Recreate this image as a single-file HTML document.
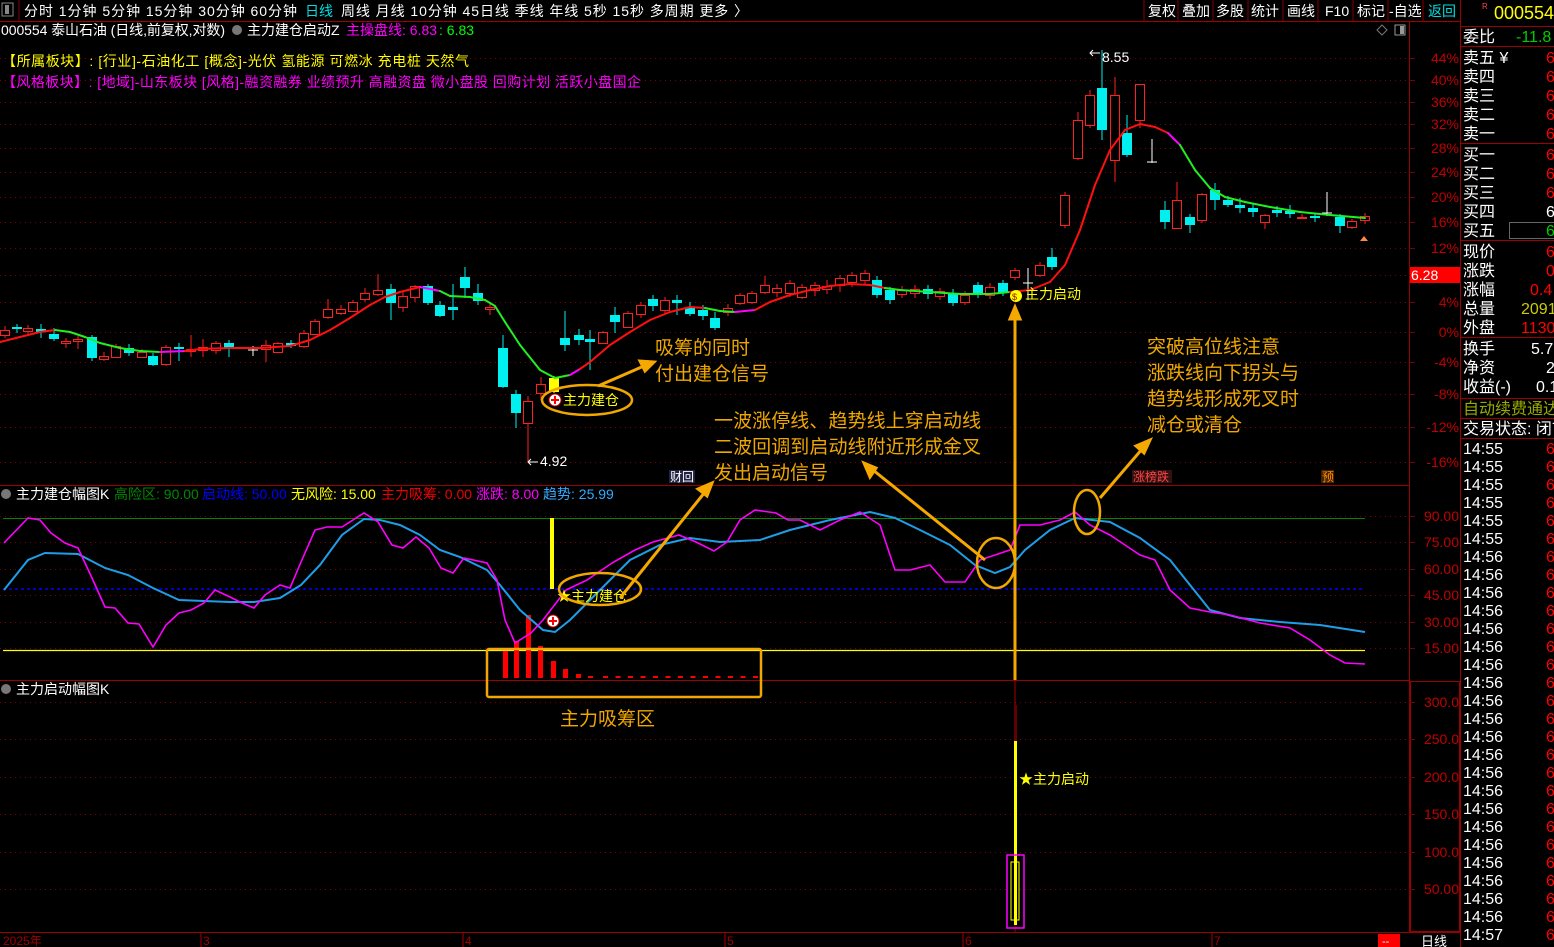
<!DOCTYPE html>
<html><head><meta charset="utf-8">
<style>
html,body{margin:0;padding:0;background:#000;width:1554px;height:947px;overflow:hidden;font-family:"Liberation Sans","Noto Sans CJK SC",sans-serif;}
svg{position:absolute;left:0;top:0}
text{font-family:"Liberation Sans","Noto Sans CJK SC",sans-serif;}
</style></head><body>
<svg id="s" width="1554" height="947" viewBox="0 0 1554 947">
<rect width="1554" height="947" fill="#000"/>
<line x1="0" y1="21.5" x2="1460" y2="21.5" stroke="#a00000"/>
<rect x="2" y="3" width="11" height="13" fill="none" stroke="#888"/><rect x="5" y="5" width="4" height="9" fill="#888"/>
<line x1="19" y1="0" x2="19" y2="21" stroke="#800"/>
<g font-size="14" fill="#fff">
<text x="24" y="16" textLength="273" lengthAdjust="spacing">分时 1分钟 5分钟 15分钟 30分钟 60分钟</text>
<text x="305" y="16" fill="#00e0e0">日线</text>
<text x="341" y="16" textLength="407" lengthAdjust="spacing">周线 月线 10分钟 45日线 季线 年线 5秒 15秒 多周期 更多 〉</text>
<text x="1148" y="16">复权</text><text x="1182" y="16">叠加</text><text x="1216" y="16">多股</text><text x="1251" y="16">统计</text><text x="1287" y="16">画线</text><text x="1325" y="16">F10</text><text x="1357" y="16">标记</text><text x="1389" y="16">-自选</text><text x="1428" y="16" fill="#00e0e0">返回</text>
</g>
<g stroke="#800"><line x1="1144" y1="0" x2="1144" y2="21"/><line x1="1178" y1="0" x2="1178" y2="21"/><line x1="1213" y1="0" x2="1213" y2="21"/><line x1="1248" y1="0" x2="1248" y2="21"/><line x1="1283" y1="0" x2="1283" y2="21"/><line x1="1318" y1="0" x2="1318" y2="21"/><line x1="1353" y1="0" x2="1353" y2="21"/><line x1="1388" y1="0" x2="1388" y2="21"/><line x1="1423" y1="0" x2="1423" y2="21"/></g>
<g font-size="14">
<text x="1" y="35" fill="#fff" textLength="224" lengthAdjust="spacing">000554 泰山石油 (日线,前复权,对数)</text>
<circle cx="237" cy="30" r="5" fill="#777"/>
<text x="247" y="35" fill="#fff">主力建仓启动Z</text>
<text x="346" y="35" fill="#f0f">主操盘线: 6.83</text>
<text x="439" y="35" fill="#0f0">: 6.83</text>
<text x="2" y="66" fill="#ff0" textLength="467" lengthAdjust="spacing">【所属板块】: [行业]-石油化工 [概念]-光伏 氢能源 可燃冰 充电桩 天然气</text>
<text x="2" y="87" fill="#f0f" textLength="639" lengthAdjust="spacing">【风格板块】: [地域]-山东板块 [风格]-融资融券 业绩预升 高融资盘 微小盘股 回购计划 活跃小盘国企</text>
</g>
<path d="M1382 25l5 5-5 5-5-5z" fill="none" stroke="#777"/><rect x="1395" y="25" width="10" height="10" fill="none" stroke="#999"/><rect x="1400" y="26" width="4" height="8" fill="#999"/>
<line x1="1409.5" y1="22" x2="1409.5" y2="932" stroke="#900"/>
<line x1="1460.5" y1="0" x2="1460.5" y2="947" stroke="#900"/>
<line x1="0" y1="485.5" x2="1409" y2="485.5" stroke="#900"/>
<line x1="0" y1="680.5" x2="1409" y2="680.5" stroke="#900"/>
<line x1="0" y1="932.5" x2="1460" y2="932.5" stroke="#900"/>
<rect x="1410.5" y="681.5" width="49" height="250" fill="none" stroke="#900"/>
<g id="grid" stroke="#700" stroke-dasharray="1 4"></g>
<g id="axis" font-size="14" fill="#c00000" text-anchor="end"></g>
<rect x="1410" y="267" width="50" height="16" fill="#f00"/><text x="1411" y="280" font-size="14" fill="#fff">6.28</text>
<g id="cdl"></g>
<g id="ma" fill="none" stroke-width="2"></g>
<text x="1102" y="62" font-size="14" fill="#fff">8.55</text><path d="M1090 53h10M1093 50l-3 3 3 3" stroke="#fff" fill="none"/>
<text x="540" y="466" font-size="14" fill="#fff">4.92</text><path d="M528 462h10M531 459l-3 3 3 3" stroke="#fff" fill="none"/>
<path d="M1360 241l4-5 4 5z" fill="#f84"/>
<circle cx="555" cy="400" r="6" fill="#fff" stroke="#c00"/><path d="M551 400h8M555 396v8" stroke="#f00" stroke-width="2"/>
<text x="563" y="405" font-size="14" fill="#ff0">主力建仓</text>
<ellipse cx="587" cy="400" rx="45" ry="15" fill="none" stroke="#f0a800" stroke-width="2.5"/>
<circle cx="1016" cy="296" r="6" fill="#ff0"/><text x="1012" y="300" font-size="9" fill="#a00">$</text>
<text x="1025" y="299" font-size="14" fill="#ff0">主力启动</text>
<g font-size="14">
<circle cx="6" cy="494" r="5" fill="#777"/>
<text x="16" y="499" fill="#fff">主力建仓幅图K</text>
<text x="114" y="499" fill="#080">高险区: 90.00</text>
<text x="202" y="499" fill="#00f">启动线: 50.00</text>
<text x="291" y="499" fill="#ff0">无风险: 15.00</text>
<text x="381" y="499" fill="#e00">主力吸筹: 0.00</text>
<text x="476" y="499" fill="#f0f">涨跌: 8.00</text>
<text x="543" y="499" fill="#3af">趋势: 25.99</text>
</g>
<rect x="669" y="470" width="26" height="13" fill="#224"/><text x="670" y="481" font-size="12" fill="#fff">财回</text>
<rect x="1132" y="470" width="40" height="13" fill="#311"/><text x="1133" y="481" font-size="12" fill="#f44">涨榜跌</text>
<rect x="1321" y="470" width="13" height="13" fill="#420"/><text x="1322" y="481" font-size="12" fill="#f80">预</text>
<line x1="3" y1="518.5" x2="1365" y2="518.5" stroke="#080"/>
<line x1="3" y1="589" x2="1365" y2="589" stroke="#00f" stroke-width="1.5" stroke-dasharray="3 3"/>
<line x1="3" y1="650.5" x2="1365" y2="650.5" stroke="#ff0" stroke-width="1.2"/>
<g id="bars" fill="#f00"></g>
<rect x="550" y="518" width="4" height="71" fill="#ff0"/>
<polyline id="blue" fill="none" stroke="#1e9ee8" stroke-width="2"/>
<polyline id="mag" fill="none" stroke="#f0f" stroke-width="1.6"/>
<circle cx="553" cy="621" r="6" fill="#fff" stroke="#c00"/><path d="M549 621h8M553 617v8" stroke="#f00" stroke-width="2"/>
<text x="557" y="601" font-size="14" fill="#ff0">★主力建仓</text>
<ellipse cx="600" cy="589" rx="41" ry="16" fill="none" stroke="#f0a800" stroke-width="2.5"/>
<ellipse cx="996" cy="563" rx="19" ry="25" fill="none" stroke="#f0a800" stroke-width="2.5"/>
<ellipse cx="1087" cy="512" rx="13" ry="22" fill="none" stroke="#f0a800" stroke-width="2.5"/>
<rect x="487" y="649" width="274" height="48" rx="2" fill="none" stroke="#f0a800" stroke-width="2.5"/>
<circle cx="6" cy="689" r="5" fill="#777"/><text x="16" y="694" font-size="14" fill="#fff">主力启动幅图K</text>
<line x1="1015" y1="486" x2="1015" y2="932" stroke="#a00"/>
<rect x="1014" y="705" width="3" height="36" fill="#600"/>
<rect x="1014" y="741" width="3" height="184" fill="#ff0"/>
<rect x="1007" y="855" width="17" height="73" fill="none" stroke="#f0f" stroke-width="1.5"/>
<rect x="1011" y="862" width="8" height="58" fill="none" stroke="#ff0"/>
<text x="1019" y="784" font-size="14" fill="#ff0">★主力启动</text>
<g stroke="#f5a800" stroke-width="3" fill="#f5a800">
<line x1="598" y1="386" x2="644" y2="366"/><path d="M654 362l-14-1 5 10z"/>
<line x1="620" y1="598" x2="705" y2="492"/><path d="M712 483l-14 6 9 7z"/>
<line x1="985" y1="560" x2="873" y2="470"/><path d="M864 463l6 14 6-9z"/>
<line x1="1100" y1="498" x2="1143" y2="448"/><path d="M1150 440l-14 6 8 7z"/>
<line x1="1015" y1="680" x2="1015" y2="318"/><path d="M1015 307l-5 12h10z"/>
</g>
<g font-size="19" fill="#f0a800">
<text x="655" y="354">吸筹的同时</text><text x="655" y="380">付出建仓信号</text>
<text x="714" y="427" textLength="267" lengthAdjust="spacing">一波涨停线、趋势线上穿启动线</text><text x="714" y="453" textLength="267" lengthAdjust="spacing">二波回调到启动线附近形成金叉</text><text x="714" y="479">发出启动信号</text>
<text x="1147" y="353">突破高位线注意</text><text x="1147" y="379">涨跌线向下拐头与</text><text x="1147" y="405">趋势线形成死叉时</text><text x="1147" y="431">减仓或清仓</text>
<text x="560" y="725">主力吸筹区</text>
</g>
<g font-size="12" fill="#a00000"><text x="3" y="945">2025年</text><text x="203" y="945">3</text><text x="465" y="945">4</text><text x="727" y="945">5</text><text x="965" y="945">6</text><text x="1214" y="945">7</text></g>
<g stroke="#a00"><line x1="201" y1="933" x2="201" y2="947"/><line x1="463" y1="933" x2="463" y2="947"/><line x1="725" y1="933" x2="725" y2="947"/><line x1="963" y1="933" x2="963" y2="947"/><line x1="1212" y1="933" x2="1212" y2="947"/></g>
<rect x="1378" y="934" width="22" height="13" fill="#f00"/><text x="1382" y="945" font-size="11" fill="#fff">--</text>
<text x="1421" y="946" font-size="13" fill="#fff">日线</text>
<text x="1482" y="9" font-size="8" fill="#f44">R</text>
<text x="1494" y="19" font-size="18" fill="#ff0">000554</text>
<g stroke="#900"><line x1="1461" y1="26.5" x2="1554" y2="26.5"/><line x1="1461" y1="46.5" x2="1554" y2="46.5"/><line x1="1461" y1="143.5" x2="1554" y2="143.5"/><line x1="1461" y1="240.5" x2="1554" y2="240.5"/><line x1="1461" y1="337.5" x2="1554" y2="337.5"/><line x1="1461" y1="398.5" x2="1554" y2="398.5"/><line x1="1461" y1="418.5" x2="1554" y2="418.5"/><line x1="1461" y1="438.5" x2="1554" y2="438.5"/></g>
<rect x="1509.5" y="222.5" width="45" height="16" fill="none" stroke="#666"/>
<g id="rp" font-size="16" fill="#fff"></g>
</svg>
<script>
var NS="http://www.w3.org/2000/svg";
function el(p,t,a,tx){var e=document.createElementNS(NS,t);for(var k in a)e.setAttribute(k,a[k]);if(tx!=null)e.textContent=tx;document.getElementById(p).appendChild(e);return e;}
var ax=[["44%",58],["40%",80],["36%",102],["32%",124],["28%",148],["24%",172],["20%",197],["16%",222],["12%",248],["",275],["4%",302],["0%",332],["-4%",362],["-8%",394],["-12%",427],["-16%",462],
["90.00",516],["75.00",542],["60.00",569],["45.00",595],["30.00",622],["15.00",648],
["300.0",702],["250.0",739],["200.0",777],["150.0",814],["100.0",852],["50.00",889]];
ax.forEach(function(a){var y=a[1];el("grid","line",{x1:0,y1:y+0.5,x2:1409,y2:y+0.5});
if(a[0])el("axis","text",{x:1459,y:y+5},a[0]);el("grid","line",{x1:1409,y1:y+0.5,x2:1415,y2:y+0.5,"stroke-dasharray":"none"});});
var C=[[5,330,335,326,338,'r'],[17,327,329,324,333,'c'],[28,328,331,325,334,'r'],[41,329,332,324,338,'c'],[54,334,339,328,341,'c'],[66,341,343,338,348,'r'],[78,339,341,336,349,'r'],[92,337,358,335,361,'c'],[104,356,359,352,361,'r'],[116,346,357,344,358,'r'],[129,348,353,344,356,'c'],[142,352,357,349,358,'r'],[153,356,365,353,366,'c'],[166,347,364,345,366,'r'],[179,347,349,343,361,'c'],[191,349,351,335,357,'r'],[203,347,350,339,357,'r'],[216,343,350,341,354,'r'],[229,343,348,340,357,'c'],[253,350,351,346,356,'w'],[266,345,349,340,362,'r'],[278,343,352,342,353,'r'],[291,343,346,340,348,'c'],[304,333,346,330,348,'r'],[315,321,334,319,335,'r'],[328,309,317,299,319,'r'],[341,309,313,305,315,'r'],[353,302,311,300,312,'r'],[365,293,299,288,302,'r'],[378,290,294,274,296,'r'],[391,289,303,284,320,'c'],[403,296,307,291,312,'r'],[415,286,297,285,302,'r'],[428,286,303,284,305,'c'],[440,305,316,301,317,'c'],[453,307,310,284,320,'c'],[465,277,288,267,298,'c'],[478,293,301,284,305,'c'],[490,307,309,303,315,'r'],[503,348,387,335,388,'c'],[516,394,413,390,428,'c'],[528,401,423,396,462,'r'],[541,384,393,377,400,'r'],[554,378,392,376,393,'y'],[565,338,345,311,351,'c'],[579,335,340,329,345,'c'],[590,339,342,330,370,'c'],[603,332,343,331,344,'r'],[615,315,322,307,333,'c'],[628,313,327,311,328,'r'],[641,305,314,302,318,'r'],[653,299,306,295,311,'c'],[665,300,310,297,314,'r'],[677,300,303,295,315,'c'],[690,308,314,302,316,'c'],
[703,310,316,305,320,'c'],[715,318,328,312,330,'c'],[728,308,312,304,316,'r'],[740,295,303,293,305,'r'],[752,293,302,291,304,'r'],[765,285,292,276,294,'r'],[777,288,292,284,297,'r'],[790,283,293,280,297,'r'],[802,287,297,284,299,'r'],[815,285,290,282,296,'r'],[827,286,289,280,294,'r'],[840,278,285,275,292,'r'],[852,275,282,272,287,'r'],[865,273,280,270,284,'r'],[877,280,295,276,298,'c'],[890,290,300,287,304,'c'],[902,290,294,286,298,'r'],[915,289,293,285,298,'r'],[928,289,294,285,299,'c'],[940,291,296,288,300,'r'],[953,293,303,289,306,'c'],[965,295,302,291,305,'r'],[978,285,293,282,298,'c'],[990,287,295,283,299,'r'],[1003,283,293,280,296,'c'],[1015,270,277,268,280,'r'],[1028,283,285,268,300,'w'],[1040,265,275,262,277,'r'],[1052,257,267,248,270,'c'],[1065,195,225,192,228,'r'],[1078,120,158,112,160,'r'],[1090,95,125,90,128,'r'],[1102,88,130,50,140,'c'],[1115,95,160,77,182,'r'],[1127,133,155,115,157,'c'],[1140,84,120,84,128,'r'],[1152,162,163,139,163,'w'],[1165,210,222,201,229,'c'],[1177,200,228,182,229,'r'],[1190,217,225,214,233,'c'],[1202,194,220,193,223,'r'],[1215,190,200,183,210,'c'],[1228,200,205,196,207,'c'],[1240,205,208,198,213,'c'],[1253,208,212,204,217,'c'],[1265,215,222,214,229,'r'],[1277,210,213,206,217,'c'],[1290,211,214,205,218,'c'],[1302,217,218,214,219,'r'],[1315,216,218,213,222,'c'],[1327,213,214,192,216,'w'],[1340,217,226,214,233,'c'],[1352,221,227,219,229,'r'],[1365,216,220,213,224,'r']];
var col={r:'#ff2020',c:'#00f0f0',y:'#ffff00',w:'#ffffff'};
C.forEach(function(c){var x=c[0],k=c[5],cl=col[k];
el("cdl","line",{x1:x,y1:c[3],x2:x,y2:c[4],stroke:cl});
var h=Math.max(1,c[2]-c[1]);
if(k=='r')el("cdl","rect",{x:x-4.5,y:c[1]+0.5,width:9,height:h,fill:'#000',stroke:cl});
else if(k=='w')el("cdl","line",{x1:x-5,y1:c[1],x2:x+5,y2:c[1],stroke:cl});
else el("cdl","rect",{x:x-5,y:c[1],width:10,height:h,fill:cl});});
var M=[[0,342,'r'],[20,337,'r'],[40,332,'r'],[55,330,'r'],[70,332,'g'],[85,337,'g'],[100,343,'g'],[120,348,'g'],[140,351,'g'],[160,352,'g'],[185,351,'m'],[200,349,'r'],[230,348,'r'],[260,348,'r'],[290,346,'r'],[310,340,'r'],[330,330,'r'],[350,318,'r'],[370,305,'r'],[385,297,'r'],[400,292,'r'],[420,287,'r'],[440,291,'m'],[450,296,'g'],[470,297,'g'],[485,300,'g'],[495,306,'g'],[505,322,'g'],[520,345,'g'],[540,370,'g'],[555,378,'g'],[570,375,'g'],[580,369,'m'],[590,362,'r'],[610,345,'r'],[630,332,'r'],[650,320,'r'],[670,312,'r'],[690,307,'r'],[705,308,'r'],[720,311,'g'],[735,312,'g'],[755,310,'m'],[770,302,'r'],[790,295,'r'],[810,290,'r'],[830,286,'r'],[850,284,'r'],[870,285,'r'],[885,288,'r'],[900,290,'g'],[930,292,'g'],[960,294,'g'],[990,294,'g'],[1010,292,'g'],[1030,290,'r'],[1050,282,'r'],[1065,265,'r'],[1080,230,'r'],[1095,185,'r'],[1110,150,'r'],[1125,130,'r'],[1140,124,'r'],[1155,127,'r'],[1168,133,'r'],[1175,140,'m'],[1180,145,'m'],[1195,170,'g'],[1210,188,'g'],[1225,197,'g'],[1245,202,'g'],[1270,207,'g'],[1300,212,'g'],[1330,215,'g'],[1365,218,'g']];
var mc={r:'#ff1010',g:'#20f020',m:'#f0f'};
for(var i=1;i<M.length;i++)el("ma","line",{x1:M[i-1][0],y1:M[i-1][1],x2:M[i][0],y2:M[i][1],stroke:mc[M[i][2]],"stroke-linecap":"round"});
var mag=[[4,543],[28,518],[40,520],[51,533],[65,543],[78,548],[92,578],[105,607],[115,608],[128,623],[139,624],[153,647],[166,625],[179,613],[191,610],[204,603],[215,590],[230,597],[242,603],[254,608],[265,595],[280,585],[290,588],[301,562],[315,530],[327,527],[342,527],[364,513],[378,522],[392,545],[403,548],[416,537],[429,548],[441,568],[453,573],[464,558],[487,563],[497,580],[505,620],[515,643],[531,633],[543,620],[566,590],[587,580],[612,563],[635,550],[653,542],[679,535],[696,542],[714,551],[727,542],[740,520],[755,510],[776,513],[788,520],[800,520],[820,530],[840,520],[860,512],[880,525],[895,570],[910,570],[930,565],[945,582],[965,582],[980,560],[995,555],[1010,550],[1020,525],[1040,525],[1060,520],[1075,512],[1090,525],[1110,535],[1125,545],[1140,555],[1155,560],[1170,590],[1190,608],[1210,612],[1230,615],[1260,623],[1290,628],[1310,640],[1330,655],[1345,663],[1365,664]];
var blu=[[4,590],[28,560],[45,553],[78,554],[105,568],[128,575],[153,588],[179,600],[204,601],[230,602],[254,602],[280,598],[301,585],[320,565],[342,535],[364,519],[380,520],[400,525],[420,535],[440,550],[460,557],[487,570],[500,585],[520,610],[543,630],[555,632],[570,620],[600,590],[630,560],[660,545],[690,538],[720,542],[760,540],[790,530],[830,520],[870,512],[895,518],[920,530],[950,545],[975,565],[995,573],[1010,567],[1025,550],[1050,530],[1075,518],[1110,522],[1140,538],[1170,560],[1190,585],[1210,610],[1240,618],[1280,622],[1320,625],[1365,632]];
document.getElementById("mag").setAttribute("points",mag.join(" "));
document.getElementById("blue").setAttribute("points",blu.join(" "));
var B=[[505,651],[516,641],[528,615],[540,646],[553,661],[565,669],[578,674],[590,676]];
B.forEach(function(b){el("bars","rect",{x:b[0]-2,y:b[1],width:5,height:678-b[1]});});
for(var x=603;x<755;x+=12.5)el("bars","rect",{x:x,y:676,width:5,height:2});
var R=[["委比",36,"-11.8","#0c0",1516],["卖五 ¥",57,"6","#f00",1546],["卖四",76,"6","#f00",1546],["卖三",95,"6","#f00",1546],["卖二",114,"6","#f00",1546],["卖一",133,"6","#f00",1546],["买一",154,"6","#f00",1546],["买二",173,"6","#f00",1546],["买三",192,"6","#f00",1546],["买四",211,"6","#fff",1546],["买五",230,"6","#0c0",1546],["现价",251,"6","#f00",1546],["涨跌",270,"0","#f00",1546],["涨幅",289,"0.4","#f00",1530],["总量",308,"2091","#cc0",1521],["外盘",327,"1130","#f00",1521],["换手",348,"5.7","#fff",1531],["净资",367,"2","#fff",1546],["收益(-)",386,"0.1","#fff",1536]];
R.forEach(function(r){el("rp","text",{x:1463,y:r[1]+6},r[0]);el("rp","text",{x:r[4],y:r[1]+6,fill:r[3]},r[2]);});
el("rp","text",{x:1463,y:414,fill:"#9a0"},"自动续费通达");
el("rp","text",{x:1463,y:434},"交易状态: 闭市");
for(var i=0;i<28;i++){var y=448+i*18;el("rp","text",{x:1463,y:y+6},i<6?"14:55":(i==27?"14:57":"14:56"));el("rp","text",{x:1546,y:y+6,fill:"#f00"},"6");}
</script>
</body></html>
